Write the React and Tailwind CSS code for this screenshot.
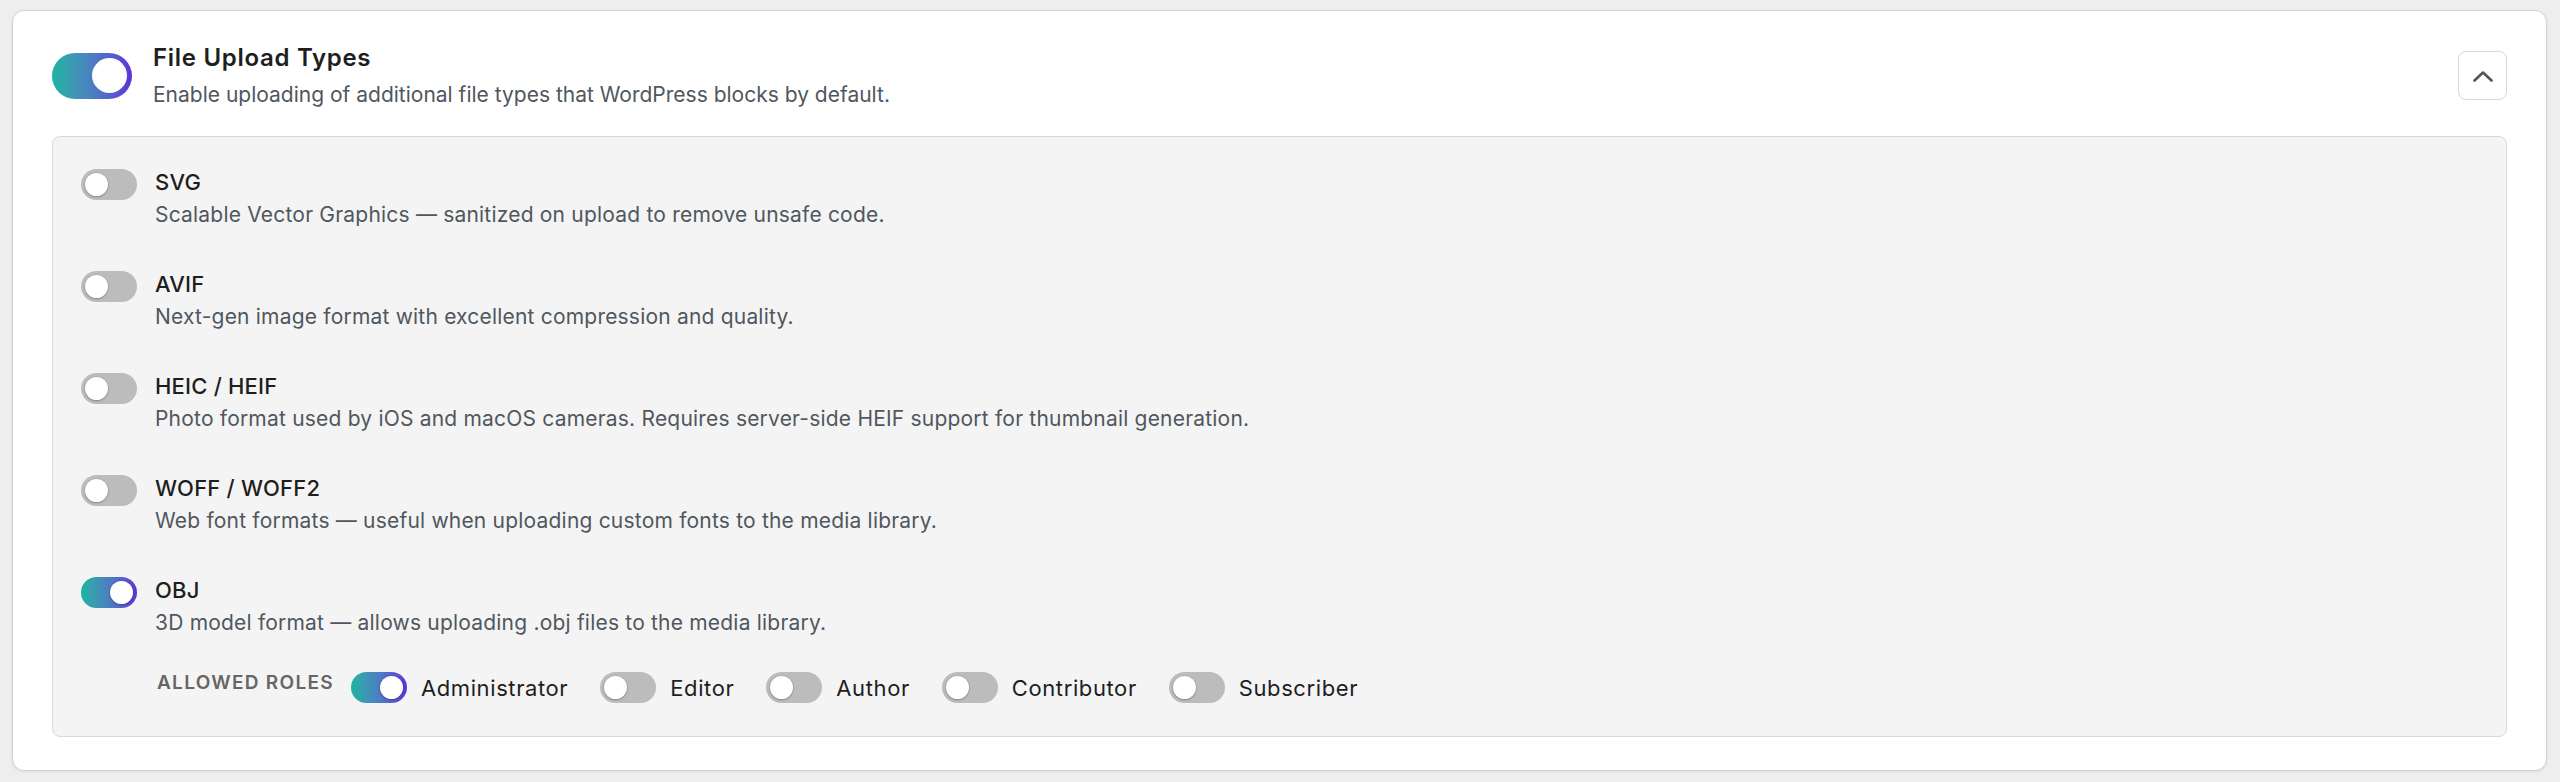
import React from "react";

const rows = [
  { t: "SVG", d: "Scalable Vector Graphics — sanitized on upload to remove unsafe code.", on: false },
  { t: "AVIF", d: "Next-gen image format with excellent compression and quality.", on: false },
  { t: "HEIC / HEIF", d: "Photo format used by iOS and macOS cameras. Requires server-side HEIF support for thumbnail generation.", on: false },
  { t: "WOFF / WOFF2", d: "Web font formats — useful when uploading custom fonts to the media library.", on: false },
  { t: "OBJ", d: "3D model format — allows uploading .obj files to the media library.", on: true, roles: true },
];

const roles = [
  { n: "Administrator", on: true },
  { n: "Editor", on: false },
  { n: "Author", on: false },
  { n: "Contributor", on: false },
  { n: "Subscriber", on: false },
];

function Toggle({ on }) {
  return (
    <div
      className={
        "relative w-[56px] h-[31px] shrink-0 rounded-full flex items-center px-[4px] " +
        (on
          ? "bg-gradient-to-r from-[#16b4a2] to-[#5e2fd8] justify-end"
          : "bg-[#bcbcbc] justify-start")
      }
    >
      <div className="w-[23px] h-[23px] rounded-full bg-white shadow-[0_0_0_1px_rgba(0,0,0,0.06),0_1px_2px_rgba(0,0,0,0.25)]" />
    </div>
  );
}

export default function App() {
  return (
    <div
      className="min-h-screen bg-[#eeeeee] pl-[12px] pr-[13px] pt-[10px] pb-[11px]"
      style={{ fontFamily: "Inter, 'Noto Sans', sans-serif" }}
    >
      <div className="rounded-[12px] border border-[#d2d2d2] bg-white px-[39px] pt-[31px] pb-[33px] shadow-[0_1px_3px_rgba(0,0,0,0.08)]">
        <div className="flex items-center">
          <div className="w-[80px] h-[46px] shrink-0 rounded-full bg-gradient-to-r from-[#16b4a2] to-[#5e2fd8] flex items-center justify-end px-[5px]">
            <div className="w-[35px] h-[35px] rounded-full bg-white" />
          </div>
          <div className="ml-[21px] flex-1">
            <div className="text-[24px] leading-[32px] font-semibold tracking-[0.7px] text-[#1e1e1e]">File Upload Types</div>
            <div className="mt-[7px] text-[21px] leading-[28px] text-[#50575e]">
              Enable uploading of additional file types that WordPress blocks by default.
            </div>
          </div>
          <div className="w-[49px] h-[49px] rounded-[8px] border border-[#d9d9d9] bg-white flex items-center justify-center">
            <svg width="20" height="12" viewBox="0 0 20 12" fill="none">
              <polyline points="1.5,10.5 10,2.5 18.5,10.5" stroke="#555" strokeWidth="2.6" strokeLinecap="round" strokeLinejoin="round" />
            </svg>
          </div>
        </div>

        <div className="mt-[27px] rounded-[8px] border border-[#d9d9d9] bg-[#f4f4f4] pl-[28px] pr-[28px] pt-[32px] pb-[33px] flex flex-col gap-[42px]">
          {rows.map((r) => (
            <div key={r.t} className="flex items-start gap-[18px]">
              <Toggle on={r.on} />
              <div className="flex-1">
                <div className="text-[22px] leading-[26px] font-medium tracking-[0.2px] text-[#1e1e1e]">{r.t}</div>
                <div className="mt-[6px] text-[21px] leading-[28px] tracking-[0.2px] text-[#50575e]">{r.d}</div>
                {r.roles && (
                  <div className="mt-[35px] flex items-center h-[31px]">
                    <div className="mb-[10px] mr-[17px] ml-[2px] text-[19px] leading-[20px] font-semibold tracking-[1.3px] text-[#666] uppercase">
                      Allowed Roles
                    </div>
                    <div className="flex items-center gap-[32px]">
                      {roles.map((ro) => (
                        <div key={ro.n} className="flex items-center gap-[14px]">
                          <Toggle on={ro.on} />
                          <span className="text-[22px] leading-[28px] tracking-[0.6px] text-[#1e1e1e]">{ro.n}</span>
                        </div>
                      ))}
                    </div>
                  </div>
                )}
              </div>
            </div>
          ))}
        </div>
      </div>
    </div>
  );
}
